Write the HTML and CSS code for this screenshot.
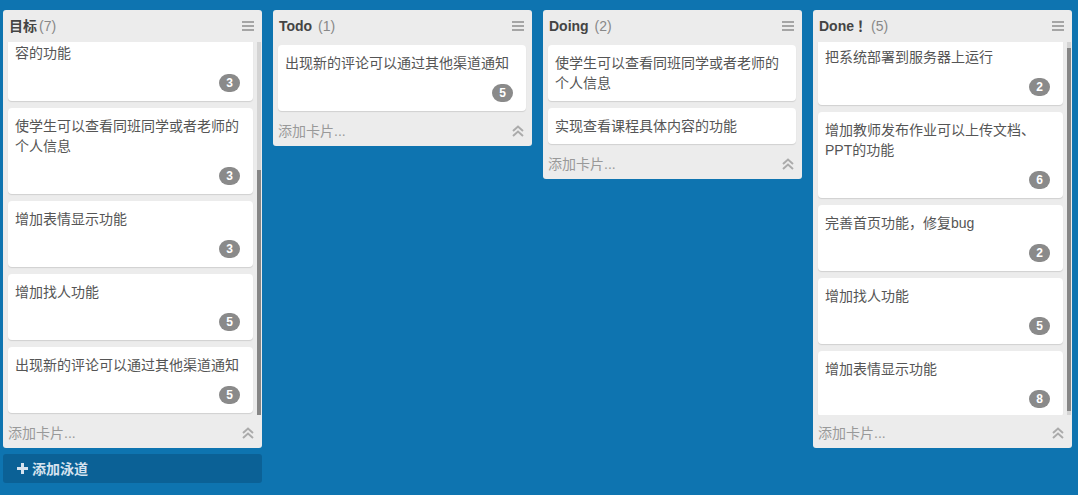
FILE: index.html
```html
<!DOCTYPE html>
<html lang="zh-CN">
<head>
<meta charset="utf-8">
<title>看板</title>
<link rel="stylesheet" href="styles.css">
</head>
<body>
<main class="board">
  <div class="column">
    <section class="list">
      <header class="list-head">
        <h2 class="list-title">目标<span class="count">(7)</span></h2>
        <span class="menu"><i></i><i></i><i></i></span>
      </header>
      <div class="scroll-wrap">
        <div class="cards cards-scroll" data-scroll="end">
          <article class="card"><p class="card-text">把系统部署到服务器上运行</p><div class="badge-row"><span class="badge">2</span></div></article>
          <article class="card"><p class="card-text">实现学生提交作业并查看批改结果的功能</p><div class="badge-row"><span class="badge">3</span></div></article>
          <article class="card"><p class="card-text">增加课程页面，实现查看课程具体内容的功能</p><div class="badge-row"><span class="badge">3</span></div></article>
          <article class="card"><p class="card-text">使学生可以查看同班同学或者老师的个人信息</p><div class="badge-row"><span class="badge">3</span></div></article>
          <article class="card"><p class="card-text">增加表情显示功能</p><div class="badge-row"><span class="badge">3</span></div></article>
          <article class="card"><p class="card-text">增加找人功能</p><div class="badge-row"><span class="badge">5</span></div></article>
          <article class="card"><p class="card-text">出现新的评论可以通过其他渠道通知</p><div class="badge-row"><span class="badge">5</span></div></article>
        </div>
        <div class="scrollbar"><div class="thumb"></div></div>
      </div>
      <footer class="list-foot list-foot-scroll">
        <span>添加卡片...</span>
        <svg class="collapse" viewBox="0 0 12 12" width="12" height="12"><polyline points="1,6 6,1.5 11,6" /><polyline points="1,11 6,6.5 11,11" /></svg>
      </footer>
    </section>
    <button class="add-lane" type="button">
      <svg class="plus" viewBox="0 0 11 11" width="11" height="11"><rect x="4" y="0" width="3" height="11"/><rect x="0" y="4" width="11" height="3"/></svg>
      <span>添加泳道</span>
    </button>
  </div>

  <div class="column">
    <section class="list">
      <header class="list-head">
        <h2 class="list-title">Todo <span class="count">(1)</span></h2>
        <span class="menu"><i></i><i></i><i></i></span>
      </header>
      <div class="cards">
        <article class="card"><p class="card-text">出现新的评论可以通过其他渠道通知</p><div class="badge-row"><span class="badge">5</span></div></article>
      </div>
      <footer class="list-foot">
        <span>添加卡片...</span>
        <svg class="collapse" viewBox="0 0 12 12" width="12" height="12"><polyline points="1,6 6,1.5 11,6" /><polyline points="1,11 6,6.5 11,11" /></svg>
      </footer>
    </section>
  </div>

  <div class="column">
    <section class="list">
      <header class="list-head">
        <h2 class="list-title">Doing <span class="count">(2)</span></h2>
        <span class="menu"><i></i><i></i><i></i></span>
      </header>
      <div class="cards">
        <article class="card"><p class="card-text">使学生可以查看同班同学或者老师的个人信息</p></article>
        <article class="card"><p class="card-text">实现查看课程具体内容的功能</p></article>
      </div>
      <footer class="list-foot">
        <span>添加卡片...</span>
        <svg class="collapse" viewBox="0 0 12 12" width="12" height="12"><polyline points="1,6 6,1.5 11,6" /><polyline points="1,11 6,6.5 11,11" /></svg>
      </footer>
    </section>
  </div>

  <div class="column">
    <section class="list">
      <header class="list-head">
        <h2 class="list-title">Done<span class="fw">！</span><span class="count">(5)</span></h2>
        <span class="menu"><i></i><i></i><i></i></span>
      </header>
      <div class="scroll-wrap">
        <div class="cards cards-scroll" data-scroll="6">
          <article class="card"><p class="card-text">把系统部署到服务器上运行</p><div class="badge-row"><span class="badge">2</span></div></article>
          <article class="card"><p class="card-text">增加教师发布作业可以上传文档、PPT的功能</p><div class="badge-row"><span class="badge">6</span></div></article>
          <article class="card"><p class="card-text">完善首页功能，修复bug</p><div class="badge-row"><span class="badge">2</span></div></article>
          <article class="card"><p class="card-text">增加找人功能</p><div class="badge-row"><span class="badge">5</span></div></article>
          <article class="card"><p class="card-text">增加表情显示功能</p><div class="badge-row"><span class="badge">8</span></div></article>
        </div>
        <div class="scrollbar"><div class="thumb"></div></div>
      </div>
      <footer class="list-foot list-foot-scroll">
        <span>添加卡片...</span>
        <svg class="collapse" viewBox="0 0 12 12" width="12" height="12"><polyline points="1,6 6,1.5 11,6" /><polyline points="1,11 6,6.5 11,11" /></svg>
      </footer>
    </section>
  </div>
</main>
<script src="script.js"></script>
</body>
</html>
```

FILE: styles.css
```css
* { box-sizing: border-box; }

html, body {
  margin: 0;
  height: 100%;
}

body {
  background: #0e74b0;
  font-family: "Liberation Sans", Arial, "Noto Sans CJK SC", sans-serif;
  font-size: 14px;
  line-height: 20px;
  color: #555;
  overflow: hidden;
}

.board {
  display: flex;
  align-items: flex-start;
  gap: 11px;
  padding: 10px 3px;
}

.column {
  display: flex;
  flex-direction: column;
  gap: 6px;
  width: 259px;
  flex: none;
}

.list {
  background: #ececec;
  border-radius: 3px;
  display: flex;
  flex-direction: column;
}

.list-head {
  height: 32px;
  display: flex;
  align-items: center;
  justify-content: space-between;
  padding: 0 8px 0 6px;
}

.list-title {
  margin: 0;
  font-size: 14px;
  font-weight: bold;
  color: #444;
  line-height: 20px;
}

.fw {
  font-weight: bold;
  margin-left: 3px;
  margin-right: -2px;
}

.count {
  font-weight: normal;
  color: #888;
  margin-left: 2px;
}

.menu {
  display: flex;
  flex-direction: column;
  gap: 2px;
  width: 12px;
}

.menu i {
  display: block;
  height: 2px;
  background: #a5a5a5;
}

.cards {
  display: flex;
  flex-direction: column;
  gap: 7px;
  padding: 3px 6px 5px 5px;
}

.scroll-wrap {
  display: flex;
  height: 373px;
  padding-right: 1px;
}

.cards-scroll {
  flex: 1;
  min-width: 0;
  height: 100%;
  overflow: hidden;
  padding: 3px 4px 2px 5px;
}

.scrollbar {
  flex: none;
  width: 4px;
  height: 100%;
  background: #d4d4d4;
}

.thumb {
  width: 100%;
  background: #868686;
}

.card {
  flex: none;
  background: #fff;
  border-radius: 4px;
  box-shadow: 0 1px 1px rgba(0, 0, 0, 0.12);
  padding: 8px 6px 8px 7px;
}

.card-text {
  margin: 0;
  color: #555;
}

.badge-row {
  display: flex;
  justify-content: flex-end;
  margin-top: 11px;
  margin-bottom: 1px;
  padding-right: 7px;
}

.badge {
  display: inline-block;
  min-width: 21px;
  height: 18px;
  padding: 0 6px;
  border-radius: 9px;
  background: #8a8a8a;
  color: #fff;
  font-size: 12px;
  font-weight: bold;
  line-height: 18px;
  text-align: center;
}

.list-foot {
  height: 30px;
  display: flex;
  align-items: center;
  justify-content: space-between;
  padding: 0 8px 0 5px;
  color: #999;
}

.list-foot-scroll {
  margin-top: 3px;
}

.collapse {
  fill: none;
  stroke: #ababab;
  stroke-width: 2;
}

.add-lane {
  display: flex;
  align-items: center;
  gap: 4px;
  height: 29px;
  width: 100%;
  padding: 0 0 0 14px;
  border: 0;
  border-radius: 3px;
  background: #0b6196;
  color: #d6e3ef;
  font-family: inherit;
  font-size: 14px;
  line-height: 20px;
  font-weight: bold;
  text-align: left;
  cursor: pointer;
}

.plus {
  fill: #d6e3ef;
}
```

FILE: script.js
```js
document.querySelectorAll('[data-scroll]').forEach(function (el) {
  var v = el.getAttribute('data-scroll');
  el.scrollTop = v === 'end' ? el.scrollHeight : Number(v);
  var bar = el.parentNode.querySelector('.scrollbar');
  if (!bar) return;
  var thumb = bar.querySelector('.thumb');
  var track = bar.clientHeight;
  var h = el.clientHeight / el.scrollHeight * track;
  var top = el.scrollTop / el.scrollHeight * track;
  thumb.style.height = h + 'px';
  thumb.style.marginTop = top + 'px';
});
```
